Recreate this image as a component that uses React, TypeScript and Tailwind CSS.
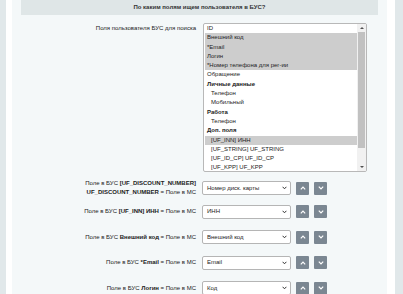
import type { ReactNode } from 'react';

type Opt = { label: string; kind?: 'group' | 'sub'; selected?: boolean };

const options: Opt[] = [
  { label: 'ID' },
  { label: 'Внешний код', selected: true },
  { label: '*Email', selected: true },
  { label: 'Логин', selected: true },
  { label: '*Номер телефона для рег-ии', selected: true },
  { label: 'Обращение' },
  { label: 'Личные данные', kind: 'group' },
  { label: 'Телефон', kind: 'sub' },
  { label: 'Мобильный', kind: 'sub' },
  { label: 'Работа', kind: 'group' },
  { label: 'Телефон', kind: 'sub' },
  { label: 'Доп. поля', kind: 'group' },
  { label: '[UF_INN] ИНН', kind: 'sub', selected: true },
  { label: '[UF_STRING] UF_STRING', kind: 'sub' },
  { label: '[UF_ID_CP] UF_ID_CP', kind: 'sub' },
  { label: '[UF_KPP] UF_KPP', kind: 'sub' },
];

const Chevron = ({ up }: { up?: boolean }) => (
  <svg width="6" height="4" viewBox="0 0 6 4" className={up ? '' : 'rotate-180'}>
    <path d="M0.8 3.3 L3 1 L5.2 3.3" fill="none" stroke="white" strokeWidth="1.2" />
  </svg>
);

const MapRow = ({ label, value }: { label: ReactNode; value: string }) => (
  <div className="grid grid-cols-[175px_1fr] gap-x-[6px] items-center h-[14px]">
    <div className="text-right leading-[9px]">{label}</div>
    <div className="flex items-center">
      <div className="w-[89px] h-[14px] bg-white border border-[#b5b5b5] rounded-[2px] flex items-center justify-between pl-[4px] pr-[3px]">
        <span>{value}</span>
        <svg width="5" height="4" viewBox="0 0 5 4">
          <path d="M0.6 0.8 L2.5 2.8 L4.4 0.8" fill="none" stroke="#333" strokeWidth="1" />
        </svg>
      </div>
      <button className="ml-[5px] w-[13px] h-[13px] bg-[#7b8792] rounded-[1px] flex items-center justify-center">
        <Chevron up />
      </button>
      <button className="ml-[5px] w-[13px] h-[13px] bg-[#7b8792] rounded-[1px] flex items-center justify-center">
        <Chevron />
      </button>
    </div>
  </div>
);

const App = () => {
  return (
    <div
      className="flex w-[403px] h-[294px] overflow-hidden text-[6px] text-[#222]"
      style={{ fontFamily: '"Liberation Sans", Arial, sans-serif' }}
    >
      <div className="w-[6px] bg-[#e1e8ea]" />
      <div className="w-[6px] bg-white" />
      <div className="flex-1 bg-[#f4f8f9] px-[9px]">
        <div className="h-[15px] bg-[#dfe6e7] flex items-center justify-center font-bold text-[#333]">
          По каким полям ищем пользователя в БУС?
        </div>

        <div className="grid grid-cols-[175px_1fr] gap-x-[7px] mt-[8px]">
          <div className="text-right pt-[1px] leading-[9px]">Поля пользователя БУС для поиска</div>
          <div className="w-[164px] h-[149px] bg-white border border-[#b8b8b8] rounded-[2px] flex overflow-hidden">
            <div className="flex-1 pl-[1px]">
              {options.map((o, i) => (
                <div
                  key={i}
                  className={
                    'h-[9.3px] leading-[9.3px] whitespace-nowrap ' +
                    (o.selected ? 'bg-[#cdcdcd] ' : '') +
                    (o.kind === 'group' ? 'font-bold pl-[2px] ' : o.kind === 'sub' ? 'pl-[6px] ' : 'pl-[2px] ')
                  }
                >
                  {o.label}
                </div>
              ))}
            </div>
            <div className="w-[9px] bg-[#f1f1f1] flex flex-col items-center">
              <div className="h-[8px] flex items-center justify-center">
                <div className="w-0 h-0 border-l-[2px] border-r-[2px] border-b-[2px] border-l-transparent border-r-transparent border-b-[#505050]" />
              </div>
              <div className="w-[7px] h-[116px] bg-[#c1c1c1]" />
              <div className="flex-1" />
              <div className="h-[8px] flex items-center justify-center">
                <div className="w-0 h-0 border-l-[2px] border-r-[2px] border-t-[2px] border-l-transparent border-r-transparent border-t-[#505050]" />
              </div>
            </div>
          </div>
        </div>

        <div className="flex flex-col gap-y-[11.5px] mt-[7px]">
          <MapRow
            label={
              <>
                Поле в БУС <b>[UF_DISCOUNT_NUMBER]</b>
                <br />
                <b>UF_DISCOUNT_NUMBER</b> = Поле в МС
              </>
            }
            value="Номер диск. карты"
          />
          <MapRow
            label={
              <>
                Поле в БУС <b>[UF_INN] ИНН</b> = Поле в МС
              </>
            }
            value="ИНН"
          />
          <MapRow
            label={
              <>
                Поле в БУС <b>Внешний код</b> = Поле в МС
              </>
            }
            value="Внешний код"
          />
          <MapRow
            label={
              <>
                Поле в БУС <b>*Email</b> = Поле в МС
              </>
            }
            value="Email"
          />
          <MapRow
            label={
              <>
                Поле в БУС <b>Логин</b> = Поле в МС
              </>
            }
            value="Код"
          />
        </div>
      </div>
      <div className="w-[8px] bg-white" />
      <div className="w-[8px] bg-[#e1e8ea]" />
    </div>
  );
};

export default App;
